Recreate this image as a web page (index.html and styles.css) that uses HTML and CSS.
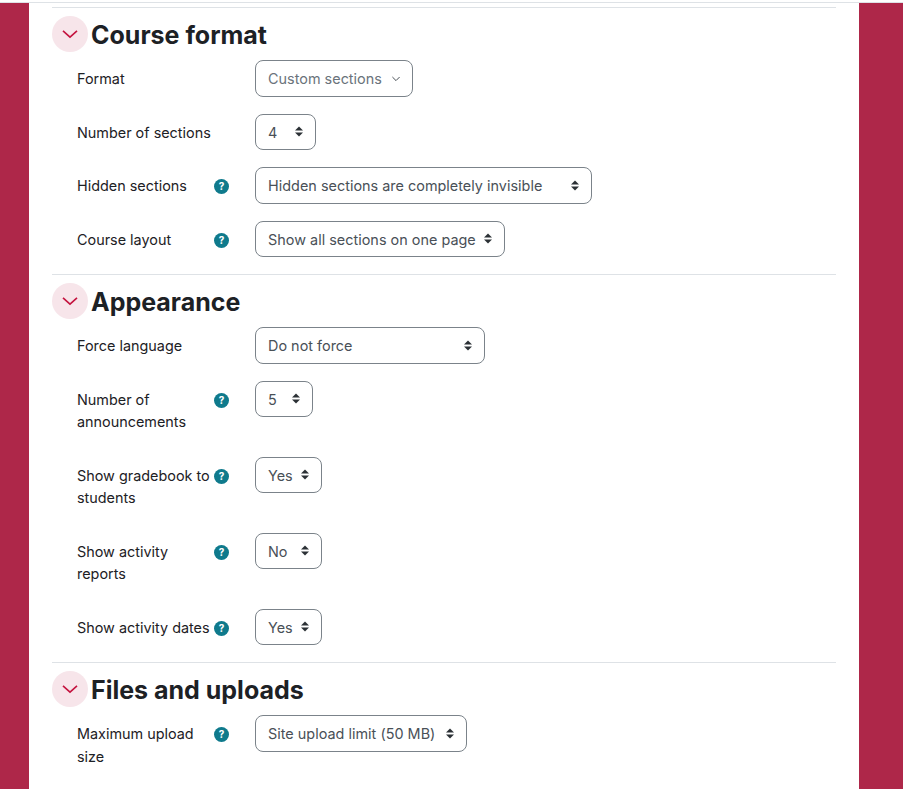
FILE: index.html
```html
<!DOCTYPE html>
<html lang="en">
<head>
<meta charset="utf-8">
<title>Course settings</title>
<link rel="stylesheet" href="styles.css">
</head>
<body>
<div class="topline"></div>
<div class="page">
<main class="card">
  <section class="section first">
    <h3 class="head"><span class="toggle"><svg width="16" height="16" viewBox="0 0 16 16"><path d="M1 4.8 8 11.2l7-6.4" fill="none" stroke="#c4133f" stroke-width="1.6"/></svg></span><span class="title">Course format</span></h3>
    <div class="row"><div class="label"><span>Format</span></div><div class="sel muted w-format">Custom sections<svg class="chev" width="8" height="6" viewBox="0 0 8 6"><path d="M.4 1 4 4.6 7.6 1" fill="none" stroke="#495057" stroke-width="1"/></svg></div></div>
    <div class="row"><div class="label"><span>Number of sections</span></div><div class="sel w-num">4<svg class="updown" width="8" height="11" viewBox="0 0 8 11"><path d="M4 .4 8 4.6H0zM4 10.6 0 6.4h8z" fill="#2b3035"/></svg></div></div>
    <div class="row"><div class="label"><span>Hidden sections</span><svg class="help" width="15" height="15" viewBox="0 0 15 15"><circle cx="7.5" cy="7.5" r="7.5" fill="#0f7a8c"/><text x="7.5" y="11" text-anchor="middle">?</text></svg></div><div class="sel w-hidden">Hidden sections are completely invisible<svg class="updown" width="8" height="11" viewBox="0 0 8 11"><path d="M4 .4 8 4.6H0zM4 10.6 0 6.4h8z" fill="#2b3035"/></svg></div></div>
    <div class="row"><div class="label"><span>Course layout</span><svg class="help" width="15" height="15" viewBox="0 0 15 15"><circle cx="7.5" cy="7.5" r="7.5" fill="#0f7a8c"/><text x="7.5" y="11" text-anchor="middle">?</text></svg></div><div class="sel w-layout">Show all sections on one page<svg class="updown" width="8" height="11" viewBox="0 0 8 11"><path d="M4 .4 8 4.6H0zM4 10.6 0 6.4h8z" fill="#2b3035"/></svg></div></div>
  </section>
  <section class="section">
    <h3 class="head"><span class="toggle"><svg width="16" height="16" viewBox="0 0 16 16"><path d="M1 4.8 8 11.2l7-6.4" fill="none" stroke="#c4133f" stroke-width="1.6"/></svg></span><span class="title">Appearance</span></h3>
    <div class="row"><div class="label"><span>Force language</span></div><div class="sel w-lang">Do not force<svg class="updown" width="8" height="11" viewBox="0 0 8 11"><path d="M4 .4 8 4.6H0zM4 10.6 0 6.4h8z" fill="#2b3035"/></svg></div></div>
    <div class="row"><div class="label"><span>Number of announcements</span><svg class="help" width="15" height="15" viewBox="0 0 15 15"><circle cx="7.5" cy="7.5" r="7.5" fill="#0f7a8c"/><text x="7.5" y="11" text-anchor="middle">?</text></svg></div><div class="sel w-five">5<svg class="updown" width="8" height="11" viewBox="0 0 8 11"><path d="M4 .4 8 4.6H0zM4 10.6 0 6.4h8z" fill="#2b3035"/></svg></div></div>
    <div class="row"><div class="label"><span>Show gradebook to students</span><svg class="help" width="15" height="15" viewBox="0 0 15 15"><circle cx="7.5" cy="7.5" r="7.5" fill="#0f7a8c"/><text x="7.5" y="11" text-anchor="middle">?</text></svg></div><div class="sel w-yes">Yes<svg class="updown" width="8" height="11" viewBox="0 0 8 11"><path d="M4 .4 8 4.6H0zM4 10.6 0 6.4h8z" fill="#2b3035"/></svg></div></div>
    <div class="row"><div class="label"><span>Show activity reports</span><svg class="help" width="15" height="15" viewBox="0 0 15 15"><circle cx="7.5" cy="7.5" r="7.5" fill="#0f7a8c"/><text x="7.5" y="11" text-anchor="middle">?</text></svg></div><div class="sel w-yes">No<svg class="updown" width="8" height="11" viewBox="0 0 8 11"><path d="M4 .4 8 4.6H0zM4 10.6 0 6.4h8z" fill="#2b3035"/></svg></div></div>
    <div class="row"><div class="label"><span>Show activity dates</span><svg class="help" width="15" height="15" viewBox="0 0 15 15"><circle cx="7.5" cy="7.5" r="7.5" fill="#0f7a8c"/><text x="7.5" y="11" text-anchor="middle">?</text></svg></div><div class="sel w-yes">Yes<svg class="updown" width="8" height="11" viewBox="0 0 8 11"><path d="M4 .4 8 4.6H0zM4 10.6 0 6.4h8z" fill="#2b3035"/></svg></div></div>
  </section>
  <section class="section">
    <h3 class="head"><span class="toggle"><svg width="16" height="16" viewBox="0 0 16 16"><path d="M1 4.8 8 11.2l7-6.4" fill="none" stroke="#c4133f" stroke-width="1.6"/></svg></span><span class="title">Files and uploads</span></h3>
    <div class="row"><div class="label"><span>Maximum upload size</span><svg class="help" width="15" height="15" viewBox="0 0 15 15"><circle cx="7.5" cy="7.5" r="7.5" fill="#0f7a8c"/><text x="7.5" y="11" text-anchor="middle">?</text></svg></div><div class="sel w-site">Site upload limit (50 MB)<svg class="updown" width="8" height="11" viewBox="0 0 8 11"><path d="M4 .4 8 4.6H0zM4 10.6 0 6.4h8z" fill="#2b3035"/></svg></div></div>
  </section>
</main>
</div>
</body>
</html>
```
FILE: styles.css
```css
* { box-sizing: border-box; }
html, body { height: 100%; }
body {
  margin: 0;
  overflow: hidden;
  background: #fff;
  font-family: Inter, "Liberation Sans", sans-serif;
  font-size: 14.4px;
  line-height: 22.5px;
  color: #1d2125;
}
.topline { height: 3px; border-bottom: 1px solid #dee2e6; }
.page { height: 786px; padding: 0 44px 0 29px; background: #ae2749; }
.card { height: 786px; overflow: hidden; padding: 4px 23px 0; background: #fff; }
.section { border-top: 1px solid #dee2e6; padding-top: 8px; }
.head {
  display: flex;
  align-items: center;
  gap: 3px;
  height: 36px;
  margin: 0 0 8px;
  font-size: 25px;
  font-weight: 700;
  line-height: 36px;
}
.title { padding-top: 2px; }
.toggle {
  display: flex;
  align-items: center;
  justify-content: center;
  width: 36px;
  height: 36px;
  border-radius: 50%;
  background: #f7e5ea;
}
.row { display: flex; align-items: flex-start; margin-bottom: 17px; margin-right: 23px; }
.label {
  display: flex;
  justify-content: space-between;
  align-items: flex-start;
  width: 203px;
  padding: 8px 0 6px 25px;
}
.label span { width: 138px; }
.help { margin: 4px 26px 0 0; flex: none; }
.help text { font: 700 10px Inter, sans-serif; fill: #fff; }
.sel {
  display: flex;
  align-items: center;
  justify-content: space-between;
  height: 36.5px;
  padding: 2px 12px 0;
  border: 1px solid #7b838a;
  border-radius: 8px;
  color: #495057;
  letter-spacing: .02px;
}
.updown { position: relative; top: -1px; }
.muted { color: #6a737b; }
.w-format { width: 158px; }
.w-num { width: 61px; }
.w-five { width: 58px; }
.w-yes { width: 67px; }
.w-lang { width: 230px; }
.w-hidden { width: 337px; }
.w-layout { width: 250px; }
.w-site { width: 212px; }
```
